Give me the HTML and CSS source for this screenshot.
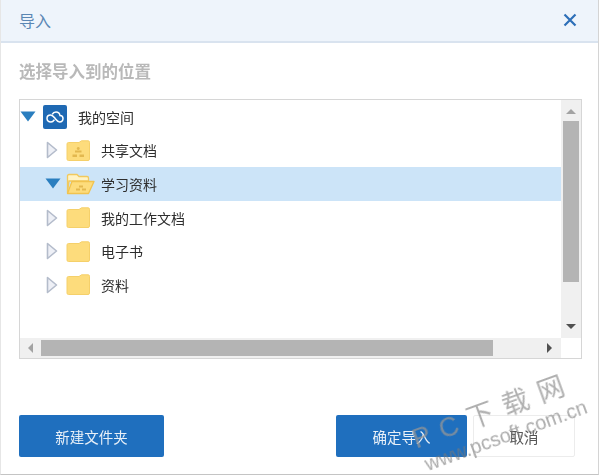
FILE: index.html
```html
<!DOCTYPE html>
<html lang="zh">
<head>
<meta charset="utf-8">
<title>导入</title>
<link rel="stylesheet" href="styles.css">
</head>
<body>
<svg class="defs" width="0" height="0" aria-hidden="true">
  <defs>
    <symbol id="closed-arrow" viewBox="0 0 12 18"><path d="M1.5 1.5 L10.5 9 L1.5 16.5 Z" fill="#eef0f6" stroke="#b4bccb" stroke-width="1.6" stroke-linejoin="round"/></symbol>
    <symbol id="open-arrow" viewBox="0 0 16 11"><path d="M0.5 0.5 H15.5 L8 10.5 Z" fill="#2a7ebf"/></symbol>
    <symbol id="folder" viewBox="0 0 24 21"><path d="M1 4 Q1 2.5 2.5 2.5 H13 L15.5 0.8 H22 Q23.5 0.8 23.5 2.2 V19 Q23.5 20.5 22 20.5 H2.5 Q1 20.5 1 19 Z" fill="#fddc7c" stroke="#f5d06a" stroke-width="1"/></symbol>
  </defs>
</svg>
<main class="dialog">
  <header class="titlebar">
    <h1 class="title">导入</h1>
    <svg class="close" width="14" height="14" viewBox="0 0 14 14"><path d="M1.5 1.5 L12.5 12.5 M12.5 1.5 L1.5 12.5" stroke="#2d6fb8" stroke-width="2.2" fill="none"/></svg>
  </header>
  <section class="body">
    <h2 class="heading">选择导入到的位置</h2>
    <div class="tree">
      <div class="tree-main">
        <ul class="list">
          <li class="row root">
            <svg class="arrow-open" width="16" height="11"><use href="#open-arrow"/></svg>
            <span class="cloud">
              <svg width="18" height="12" viewBox="0 0 18 12"><path d="M5 11 C2.5 11 1 9.3 1 7.3 C1 5.3 2.6 4 4.5 4 C6.5 4 7.6 5.6 9 7.3 C10.4 9 11.4 11 13.6 11 C15.6 11 17 9.4 17 7.6 C17 5.7 15.6 4.4 14 4.4 C13.6 2.3 11.8 1 10 1 C8.2 1 6.9 2 6.2 3.4 M5 11 C6.6 11 7.6 9.9 8.4 8.8" fill="none" stroke="#fff" stroke-width="1.5"/></svg>
            </span>
            <span class="label root-label">我的空间</span>
          </li>
          <li class="row child">
            <svg class="arrow-closed" width="12" height="18"><use href="#closed-arrow"/></svg>
            <svg class="folder" width="24" height="21" viewBox="0 0 24 21"><use href="#folder" width="24" height="21"/><path d="M12.2 7 a1.5 1.5 0 1 0 .1 0 M9 12.5 H15.5 V10.5 H9 Z M6.5 17 H11 V14.5 H6.5 Z M13.5 17 H18 V14.5 H13.5 Z" fill="#e3b84f"/></svg>
            <span class="label">共享文档</span>
          </li>
          <li class="row child selected">
            <svg class="arrow-open" width="16" height="11"><use href="#open-arrow"/></svg>
            <svg class="folder open" width="29" height="22" viewBox="0 0 29 22"><path d="M1.5 20 V3 Q1.5 1.5 3 1.5 H11 L13 3.5 H21 Q22.5 3.5 22.5 5 V8 H3 Z" fill="#fff3c6" stroke="#f1c95e" stroke-width="1.3"/><path d="M1.5 20.5 L6 8.5 H28 L22.5 20.5 Z" fill="#fddc7c" stroke="#f1c34f" stroke-width="1.3" stroke-linejoin="round"/><path d="M10 17.5 H14 V15.5 H10 Z M16 17.5 H20 V15.5 H16 Z M13 14.5 H17 V12.5 H13 Z" fill="#e3b84f"/></svg>
            <span class="label open-label">学习资料</span>
          </li>
          <li class="row child">
            <svg class="arrow-closed" width="12" height="18"><use href="#closed-arrow"/></svg>
            <svg class="folder" width="24" height="21"><use href="#folder" width="24" height="21"/></svg>
            <span class="label">我的工作文档</span>
          </li>
          <li class="row child">
            <svg class="arrow-closed" width="12" height="18"><use href="#closed-arrow"/></svg>
            <svg class="folder" width="24" height="21"><use href="#folder" width="24" height="21"/></svg>
            <span class="label">电子书</span>
          </li>
          <li class="row child">
            <svg class="arrow-closed" width="12" height="18"><use href="#closed-arrow"/></svg>
            <svg class="folder" width="24" height="21"><use href="#folder" width="24" height="21"/></svg>
            <span class="label">资料</span>
          </li>
        </ul>
        <div class="vscroll">
          <span class="tri tri-up"></span>
          <span class="vthumb"></span>
          <span class="tri tri-down"></span>
        </div>
      </div>
      <div class="hscroll">
        <span class="tri tri-left"></span>
        <span class="hthumb"></span>
        <span class="tri tri-right"></span>
        <span class="corner"></span>
      </div>
    </div>
    <footer class="actions">
      <button class="btn primary new-folder">新建文件夹</button>
      <button class="btn primary confirm">确定导入</button>
      <button class="btn cancel">取消</button>
    </footer>
  </section>
</main>
<div class="watermark">
  <div class="wm-big">P C 下 载 网</div>
  <div class="wm-small">www.pcsoft.com.cn</div>
</div>
</body>
</html>
```
FILE: styles.css
```css
* { box-sizing: border-box; }
html, body { margin: 0; padding: 0; }
body {
  width: 600px;
  height: 476px;
  overflow: hidden;
  position: relative;
  background: #fff;
  font-family: "Noto Sans CJK SC", "Liberation Sans", sans-serif;
  color: #333;
}
.defs { position: absolute; }
.dialog {
  width: 599px;
  height: 475px;
  border-left: 1px solid #e6e6e6;
  border-right: 1px solid #d4d4d4;
  border-bottom: 1px solid #c4c4c4;
  display: flex;
  flex-direction: column;
  filter: blur(0.35px);
}
.titlebar {
  height: 43px;
  flex: none;
  background: #eef4fb;
  border-bottom: 2px solid #d9e3ef;
  display: flex;
  align-items: center;
  justify-content: space-between;
  padding: 0 21px 1px 18px;
}
.title {
  margin: 0;
  font-size: 16px;
  font-weight: 400;
  color: #5b87b4;
}
.close { display: block; }
.body {
  flex: 1;
  display: flex;
  flex-direction: column;
  padding: 16px 17px 0 18px;
}
.heading {
  margin: 0;
  height: 24px;
  line-height: 24px;
  font-size: 16.5px;
  font-weight: 700;
  color: #b9b9b9;
}
.tree {
  margin-top: 16px;
  width: 563px;
  height: 260px;
  border: 1px solid #d6d6d6;
  display: flex;
  flex-direction: column;
}
.tree-main {
  flex: 1;
  display: flex;
  min-height: 0;
}
.list {
  flex: 1;
  list-style: none;
  margin: 0;
  padding: 0;
}
.row {
  height: 33.6px;
  display: flex;
  align-items: center;
  font-size: 14px;
  color: #2e2e2e;
}
.root { padding-left: 0; }
.child { padding-left: 26px; }
.selected { background: #cce4f8; padding-left: 25px; }
.arrow-open, .arrow-closed, .folder { flex: none; display: block; }
.cloud {
  flex: none;
  width: 24px;
  height: 24px;
  margin-left: 7px;
  background: #1f69b3;
  border-radius: 2px;
  display: flex;
  align-items: center;
  justify-content: center;
}
.cloud svg { display: block; }
.folder { margin-left: 8px; }
.folder.open { margin-left: 5px; }
.label { margin-left: 11px; }
.root-label { margin-left: 11px; }
.open-label { margin-left: 6px; }
.vscroll {
  flex: none;
  width: 20px;
  background: #f0f0f0;
  display: flex;
  flex-direction: column;
  align-items: center;
  padding-top: 9px;
}
.vthumb {
  width: 16px;
  height: 161px;
  margin-top: 7px;
  background: #b4b4b4;
}
.tri { display: block; width: 0; height: 0; flex: none; }
.tri-up {
  border-left: 5px solid transparent;
  border-right: 5px solid transparent;
  border-bottom: 5px solid #a3a3a3;
}
.tri-down {
  margin-top: 42px;
  border-left: 5px solid transparent;
  border-right: 5px solid transparent;
  border-top: 5px solid #505050;
}
.hscroll {
  flex: none;
  height: 20px;
  background: #f0f0f0;
  display: flex;
  align-items: center;
  padding-left: 8px;
}
.tri-left {
  border-top: 5px solid transparent;
  border-bottom: 5px solid transparent;
  border-right: 5px solid #a3a3a3;
}
.hthumb {
  width: 452px;
  height: 16px;
  margin-left: 8px;
  background: #b4b4b4;
}
.tri-right {
  margin-left: 54px;
  border-top: 5px solid transparent;
  border-bottom: 5px solid transparent;
  border-left: 5px solid #505050;
}
.corner {
  margin-left: auto;
  width: 20px;
  height: 20px;
  background: #fff;
}
.actions {
  margin-top: 56px;
  display: flex;
  align-items: flex-start;
}
.btn {
  height: 42px;
  padding: 0;
  font-family: inherit;
  font-size: 14.5px;
  border-radius: 2px;
  border: 0;
}
.primary { background: #1f6fbe; color: #e8f0f8; }
.new-folder { width: 145px; }
.confirm { width: 131px; margin-left: 172px; }
.cancel {
  width: 102px;
  margin-left: 6px;
  background: #fff;
  border: 1px solid #ececec;
  color: #555;
}
.watermark {
  position: absolute;
  left: 426px;
  top: 421px;
  width: 180px;
  height: 54px;
  transform: rotate(-20deg);
  transform-origin: left bottom;
  pointer-events: none;
  color: rgba(120, 120, 120, 0.62);
  white-space: nowrap;
}
.wm-big {
  font-size: 27px;
  line-height: 34px;
  word-spacing: 3px;
  font-family: "Liberation Sans", "Noto Sans CJK SC", sans-serif;
  color: rgba(150, 150, 150, 0.75);
}
.wm-small {
  padding-left: 3px;
  font-size: 20px;
  line-height: 20px;
  font-family: "Liberation Sans", sans-serif;
}
```
